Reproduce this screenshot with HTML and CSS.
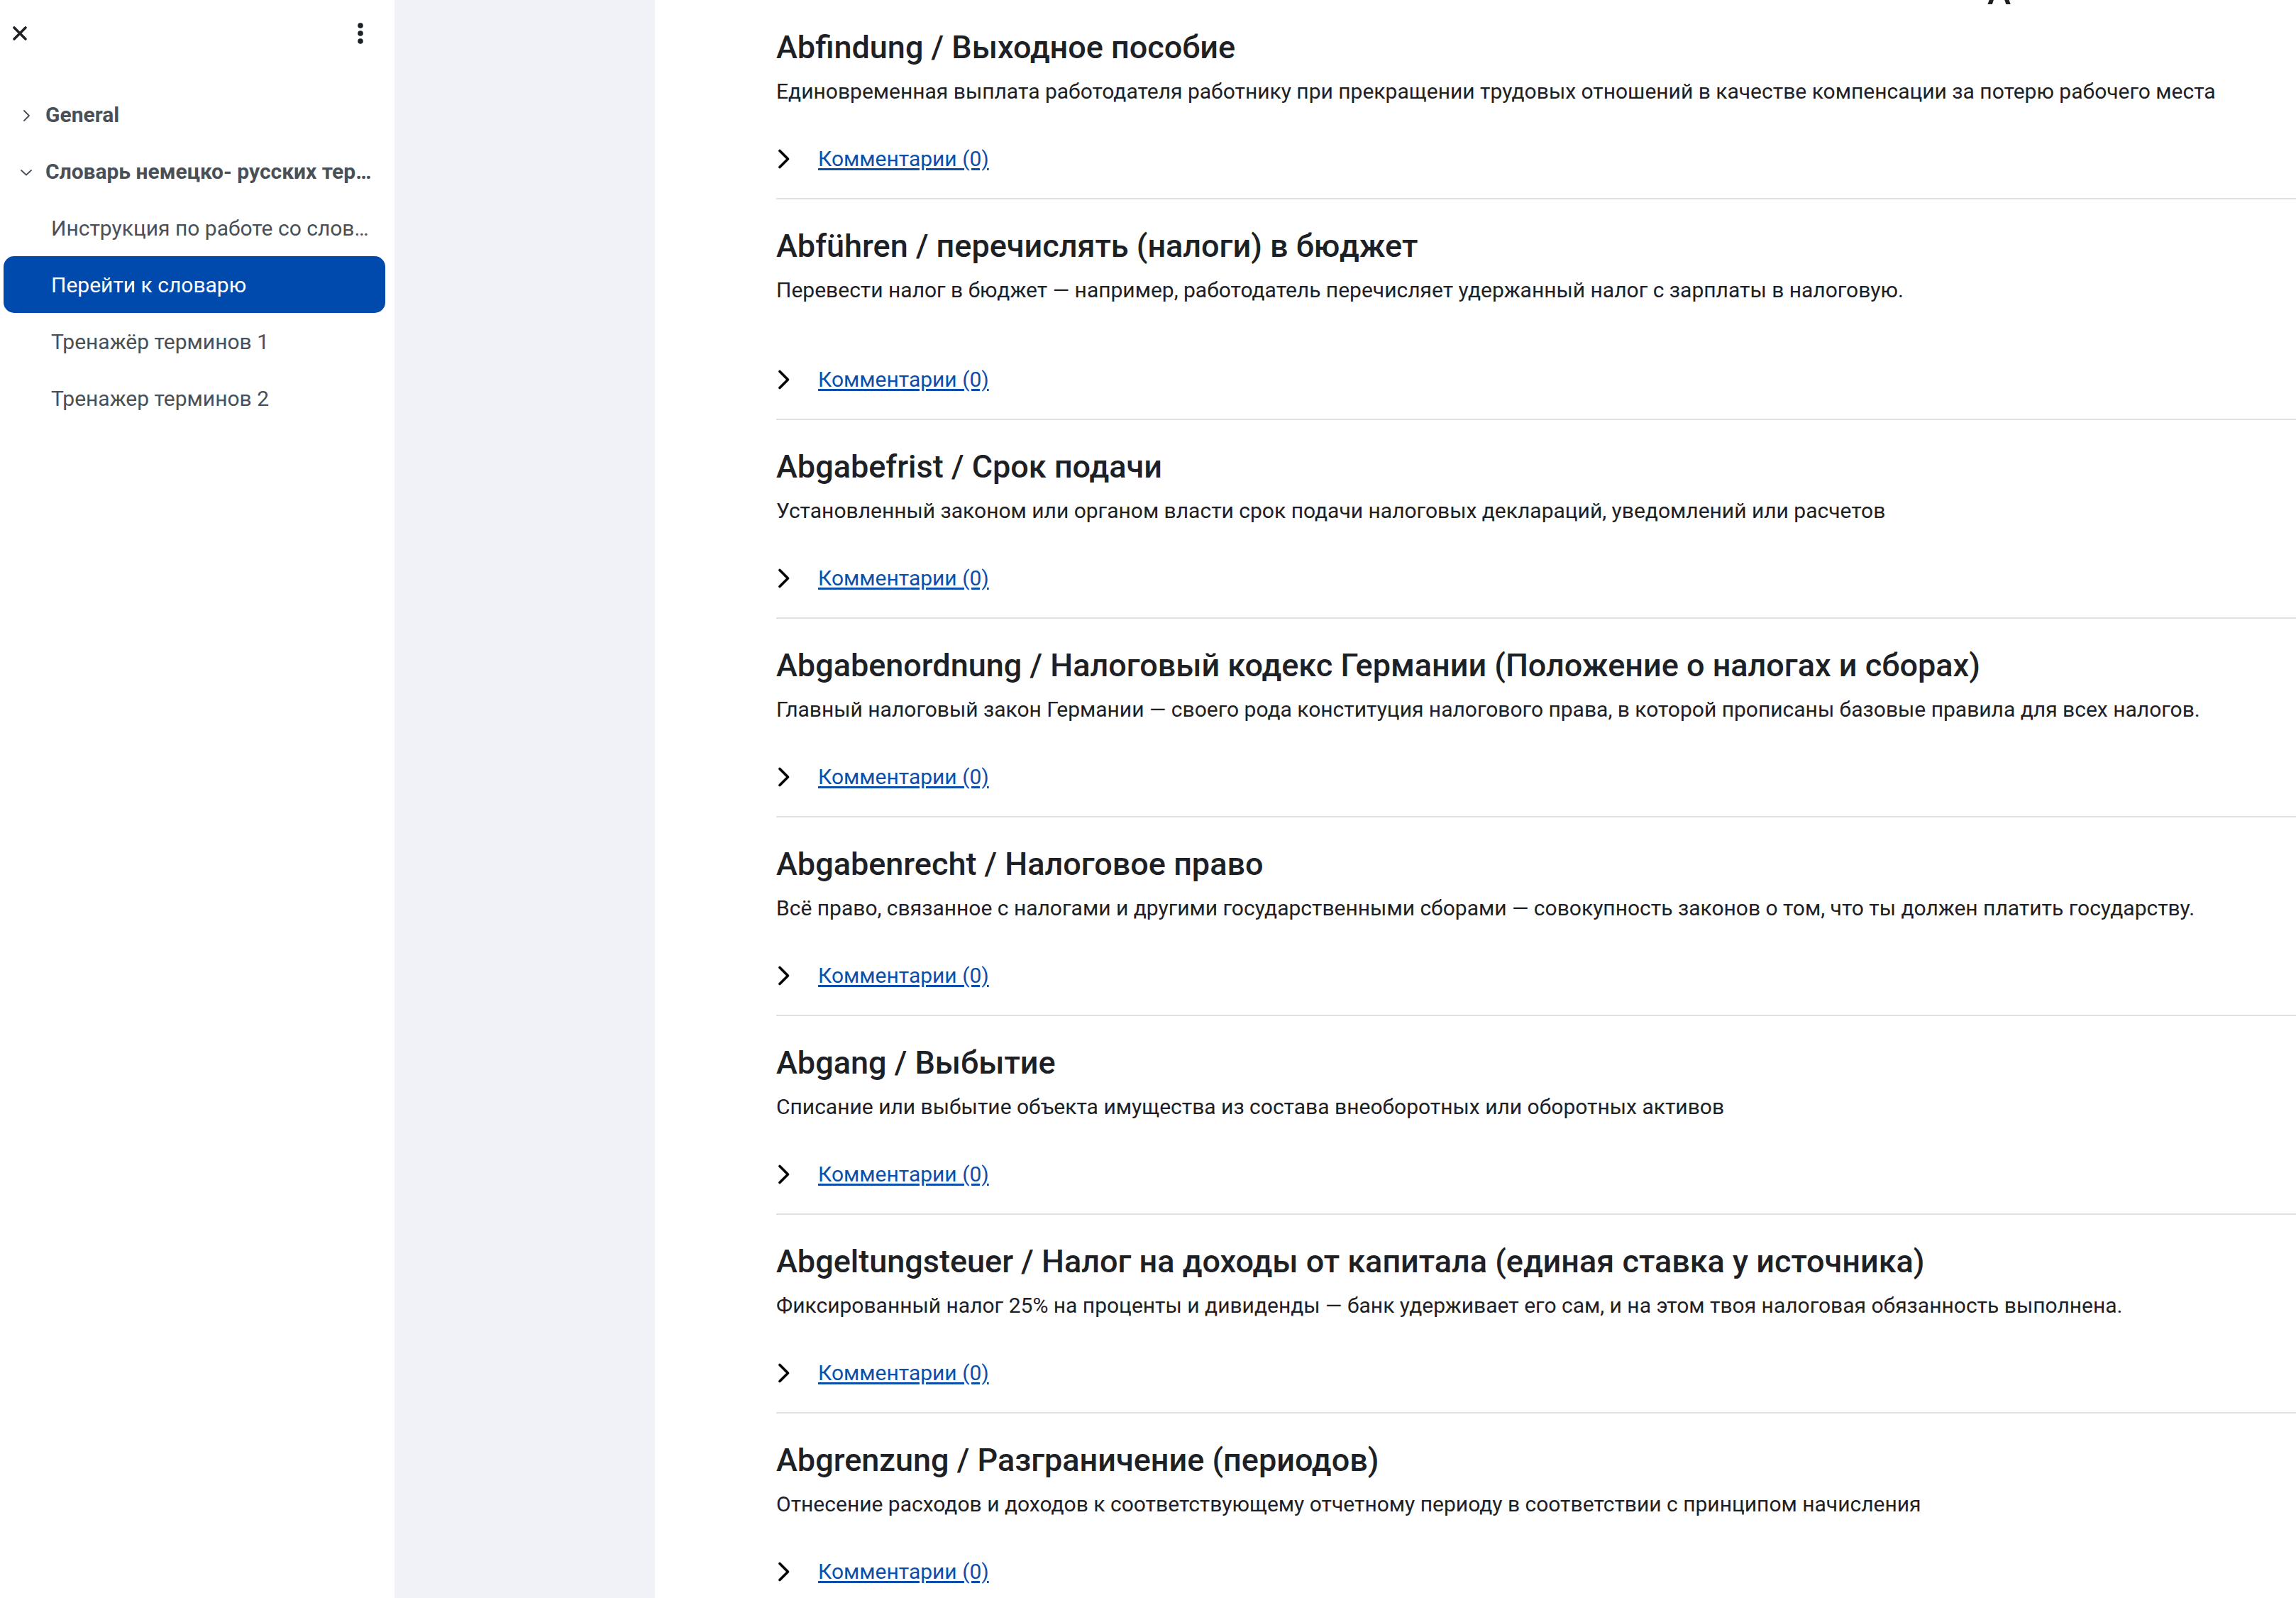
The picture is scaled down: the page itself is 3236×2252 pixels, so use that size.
FILE: index.html
```html
<!DOCTYPE html>
<html lang="ru">
<head>
<meta charset="utf-8">
<title>Словарь</title>
<link rel="stylesheet" href="styles.css">
</head>
<body>
<aside class="sidebar">
  <div class="sidebar-head">
    <button class="icon-btn close-btn" aria-label="Закрыть">
      <svg width="22" height="22" viewBox="0 0 22 22"><path d="M3 3 L19 19 M19 3 L3 19" stroke="#1d2125" stroke-width="3.6" stroke-linecap="round" fill="none"/></svg>
    </button>
    <button class="icon-btn dots-btn" aria-label="Меню">
      <svg width="10" height="30" viewBox="0 0 10 30"><circle cx="5" cy="4" r="3.8" fill="#1d2125"/><circle cx="5" cy="15" r="3.8" fill="#1d2125"/><circle cx="5" cy="26" r="3.8" fill="#1d2125"/></svg>
    </button>
  </div>
  <nav class="nav">
    <div class="nav-section">
      <svg class="nav-chev" width="16" height="16" viewBox="0 0 16 16"><path d="M5 1 L12 8 L5 15" stroke="#495057" stroke-width="1.8" fill="none" stroke-linecap="round" stroke-linejoin="round"/></svg>
      <span class="nav-text">General</span>
    </div>
    <div class="nav-section">
      <svg class="nav-chev" width="16" height="16" viewBox="0 0 16 16"><path d="M1 5 L8 11.5 L15 5" stroke="#495057" stroke-width="1.8" fill="none" stroke-linecap="round" stroke-linejoin="round"/></svg>
      <span class="nav-text">Словарь немецко- русских терминов</span>
    </div>
    <a class="nav-item" href="#"><span class="nav-text">Инструкция по работе со словарём</span></a>
    <a class="nav-item active" href="#"><span class="nav-text">Перейти к словарю</span></a>
    <a class="nav-item" href="#"><span class="nav-text">Тренажёр терминов 1</span></a>
    <a class="nav-item" href="#"><span class="nav-text">Тренажер терминов 2</span></a>
  </nav>
</aside>
<div class="gutter"></div>
<main class="main">
  <div class="letter">A</div>

  <section class="entry">
    <h3 class="term">Abfindung / Выходное пособие</h3>
    <p class="desc">Единовременная выплата работодателя работнику при прекращении трудовых отношений в качестве компенсации за потерю рабочего места</p>
    <div class="comments"><svg class="chev" width="20" height="28" viewBox="0 0 20 28"><path d="M4 2.5 L15.5 14 L4 25.5" stroke="#000" stroke-width="3.6" fill="none" stroke-linecap="round" stroke-linejoin="round"/></svg><a href="#" class="comments-link">Комментарии (0)</a></div>
  </section>

  <section class="entry">
    <h3 class="term">Abführen / перечислять (налоги) в бюджет</h3>
    <p class="desc">Перевести налог в бюджет — например, работодатель перечисляет удержанный налог с зарплаты в налоговую.</p>
    <div class="spacer"></div>
    <div class="comments"><svg class="chev" width="20" height="28" viewBox="0 0 20 28"><path d="M4 2.5 L15.5 14 L4 25.5" stroke="#000" stroke-width="3.6" fill="none" stroke-linecap="round" stroke-linejoin="round"/></svg><a href="#" class="comments-link">Комментарии (0)</a></div>
  </section>

  <section class="entry">
    <h3 class="term">Abgabefrist / Срок подачи</h3>
    <p class="desc">Установленный законом или органом власти срок подачи налоговых деклараций, уведомлений или расчетов</p>
    <div class="comments"><svg class="chev" width="20" height="28" viewBox="0 0 20 28"><path d="M4 2.5 L15.5 14 L4 25.5" stroke="#000" stroke-width="3.6" fill="none" stroke-linecap="round" stroke-linejoin="round"/></svg><a href="#" class="comments-link">Комментарии (0)</a></div>
  </section>

  <section class="entry">
    <h3 class="term">Abgabenordnung / Налоговый кодекс Германии (Положение о налогах и сборах)</h3>
    <p class="desc">Главный налоговый закон Германии — своего рода конституция налогового права, в которой прописаны базовые правила для всех налогов.</p>
    <div class="comments"><svg class="chev" width="20" height="28" viewBox="0 0 20 28"><path d="M4 2.5 L15.5 14 L4 25.5" stroke="#000" stroke-width="3.6" fill="none" stroke-linecap="round" stroke-linejoin="round"/></svg><a href="#" class="comments-link">Комментарии (0)</a></div>
  </section>

  <section class="entry">
    <h3 class="term">Abgabenrecht / Налоговое право</h3>
    <p class="desc">Всё право, связанное с налогами и другими государственными сборами — совокупность законов о том, что ты должен платить государству.</p>
    <div class="comments"><svg class="chev" width="20" height="28" viewBox="0 0 20 28"><path d="M4 2.5 L15.5 14 L4 25.5" stroke="#000" stroke-width="3.6" fill="none" stroke-linecap="round" stroke-linejoin="round"/></svg><a href="#" class="comments-link">Комментарии (0)</a></div>
  </section>

  <section class="entry">
    <h3 class="term">Abgang / Выбытие</h3>
    <p class="desc">Списание или выбытие объекта имущества из состава внеоборотных или оборотных активов</p>
    <div class="comments"><svg class="chev" width="20" height="28" viewBox="0 0 20 28"><path d="M4 2.5 L15.5 14 L4 25.5" stroke="#000" stroke-width="3.6" fill="none" stroke-linecap="round" stroke-linejoin="round"/></svg><a href="#" class="comments-link">Комментарии (0)</a></div>
  </section>

  <section class="entry">
    <h3 class="term">Abgeltungsteuer / Налог на доходы от капитала (единая ставка у источника)</h3>
    <p class="desc">Фиксированный налог 25% на проценты и дивиденды — банк удерживает его сам, и на этом твоя налоговая обязанность выполнена.</p>
    <div class="comments"><svg class="chev" width="20" height="28" viewBox="0 0 20 28"><path d="M4 2.5 L15.5 14 L4 25.5" stroke="#000" stroke-width="3.6" fill="none" stroke-linecap="round" stroke-linejoin="round"/></svg><a href="#" class="comments-link">Комментарии (0)</a></div>
  </section>

  <section class="entry">
    <h3 class="term">Abgrenzung / Разграничение (периодов)</h3>
    <p class="desc">Отнесение расходов и доходов к соответствующему отчетному периоду в соответствии с принципом начисления</p>
    <div class="comments"><svg class="chev" width="20" height="28" viewBox="0 0 20 28"><path d="M4 2.5 L15.5 14 L4 25.5" stroke="#000" stroke-width="3.6" fill="none" stroke-linecap="round" stroke-linejoin="round"/></svg><a href="#" class="comments-link">Комментарии (0)</a></div>
  </section>
</main>
</body>
</html>
```
FILE: styles.css
```css
* { box-sizing: border-box; }
html, body { margin: 0; padding: 0; }
body {
  display: flex;
  height: 2252px;
  overflow: hidden;
  font-family: Roboto, "Liberation Sans", sans-serif;
  color: #1d2125;
  background: #fff;
}

/* Sidebar */
.sidebar {
  flex: 0 0 556px;
  width: 556px;
  background: #fff;
  padding: 0 13px 0 5px;
}
.sidebar-head {
  height: 121px;
  padding-top: 36px;
  display: flex;
  justify-content: space-between;
  align-items: flex-start;
}
.icon-btn {
  border: 0;
  background: none;
  padding: 0;
  display: flex;
  align-items: center;
  justify-content: center;
  cursor: pointer;
}
.close-btn { width: 22px; height: 22px; margin-left: 12px; }
.dots-btn { width: 10px; height: 30px; margin-right: 30px; margin-top: -4px; }

.nav { display: flex; flex-direction: column; }
.nav-section, .nav-item {
  height: 80px;
  display: flex;
  align-items: center;
  font-size: 30px;
  color: #495057;
  text-decoration: none;
  border-radius: 15px;
}
.nav-section {
  font-weight: 700;
  padding: 0 12px 0 24px;
}
.nav-chev { flex: 0 0 16px; margin-right: 19px; margin-top: 3px; }
.nav-item {
  padding: 0 21px 0 67px;
}
.nav-text {
  white-space: nowrap;
  overflow: hidden;
  text-overflow: ellipsis;
  min-width: 0;
}
.nav-item.active {
  background: #004aad;
  color: #fff;
}

/* Gutter */
.gutter {
  flex: 0 0 367px;
  background: #f1f2f7;
}

/* Main */
.main {
  flex: 1 1 auto;
  min-width: 0;
  padding-left: 171px;
  overflow: hidden;
}
.letter {
  height: 0;
  margin: -36px 0 37px;
  padding-left: 1707px;
  font-size: 50px;
  line-height: 50px;
  font-weight: 500;
  color: #1d2125;
  white-space: nowrap;
}
.entry {
  padding: 39px 0 25px;
  border-bottom: 2px solid #dee2e6;
}
.term {
  margin: 0 0 15px;
  font-size: 45px;
  line-height: 53px;
  font-weight: 500;
  color: #1d2125;
  white-space: nowrap;
}
.desc {
  margin: 0;
  font-size: 30px;
  line-height: 42px;
  color: #1d2125;
  white-space: nowrap;
}
.spacer { height: 31px; }
.comments {
  margin-top: 44px;
  height: 60px;
  display: flex;
  align-items: center;
}
.chev { flex: 0 0 20px; margin-right: 38px; margin-left: 1px; }
.comments-link {
  font-size: 30px;
  line-height: 60px;
  color: #0b4fab;
  text-decoration: underline;
  text-underline-offset: 3px;
}
```
